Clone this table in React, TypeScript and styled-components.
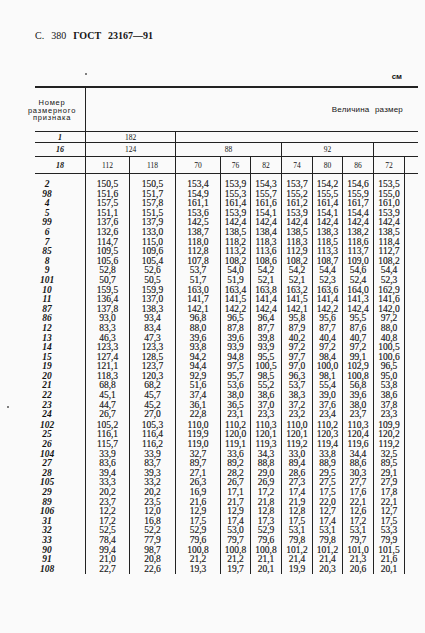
import React from "react";
import styled, { createGlobalStyle } from "styled-components";

const GlobalStyle = createGlobalStyle`
  html, body {
    margin: 0;
    padding: 0;
    background: #fafafa;
  }
`;

const COLS = "50px 44px 46px 45px 30px 31px 31px 30px 31px 31px 14px";
const LINE = "#222";

const Page = styled.div`
  position: relative;
  width: 425px;
  min-height: 633px;
  box-sizing: border-box;
  padding: 30px 7px 0 35px;
  background: #fafafa;
  color: #141414;
  font-family: "Liberation Serif", "DejaVu Serif", serif;
`;

const Title = styled.div`
  display: flex;
  gap: 7px;
  font-size: 10px;
  line-height: 12px;
`;

const TitleBold = styled.span`
  font-weight: bold;
`;

const Unit = styled.div`
  margin-top: 30px;
  padding-right: 16px;
  text-align: right;
  font-family: "Liberation Sans", Arial, sans-serif;
  font-weight: bold;
  font-size: 8px;
  line-height: 10px;
`;

const Table = styled.div`
  margin-top: 4px;
  border-top: 2px solid ${LINE};
`;

const HeadTop = styled.div`
  display: grid;
  grid-template-columns: 50px 1fr;
  height: 43px;
  border-bottom: 1px solid ${LINE};
`;

const HeadLabel = styled.div`
  display: flex;
  flex-direction: column;
  align-items: center;
  padding: 11px 16px 0 0;
  font-family: "Liberation Sans", Arial, sans-serif;
  font-size: 7.5px;
  line-height: 7.5px;
  letter-spacing: 0.8px;
  white-space: nowrap;
`;

const HeadCaption = styled.div`
  display: flex;
  align-items: center;
  justify-content: flex-end;
  padding-right: 15px;
  border-left: 1px solid ${LINE};
  font-family: "Liberation Sans", Arial, sans-serif;
  font-size: 8px;
  letter-spacing: 0.2px;
  word-spacing: 3px;
`;

const HeadRow = styled.div<{ $h: number }>`
  display: grid;
  grid-template-columns: ${COLS};
  height: ${(p) => p.$h}px;
  border-bottom: 1px solid ${LINE};
`;

const HeadNum = styled.div`
  display: flex;
  align-items: center;
  justify-content: center;
  font-style: italic;
  font-weight: bold;
  font-size: 8px;
`;

const HeadCell = styled.div<{ $span?: number; $line?: boolean }>`
  grid-column: span ${(p) => p.$span ?? 1};
  display: flex;
  align-items: center;
  justify-content: center;
  border-left: ${(p) => (p.$line ? `1px solid ${LINE}` : "none")};
  font-size: 7.5px;
`;

const DataRow = styled.div`
  display: grid;
  grid-template-columns: ${COLS};
  line-height: 9.6px;
`;

const RowLabel = styled.div<{ $top: number }>`
  padding: ${(p) => p.$top}px 26px 0 0;
  text-align: center;
  font-style: italic;
  font-weight: bold;
  font-size: 9.5px;
`;

const Value = styled.div<{ $top: number }>`
  padding-top: ${(p) => p.$top}px;
  border-left: 1px solid ${LINE};
  text-align: center;
  font-size: 9.5px;
  white-space: nowrap;
  -webkit-text-stroke: 0.15px #141414;
`;

const Speck = styled.span<{ $x: number; $y: number }>`
  position: absolute;
  left: ${(p) => p.$x}px;
  top: ${(p) => p.$y}px;
  width: 2px;
  height: 2px;
  border-radius: 50%;
  background: #555;
`;

const columns = ["112", "118", "70", "76", "82", "74", "80", "86", "72"];

const rows: [string, string][] = [
  ["2", "150,5 150,5 153,4 153,9 154,3 153,7 154,2 154,6 153,5"],
  ["98", "151,6 151,7 154,9 155,3 155,7 155,2 155,5 155,9 155,0"],
  ["4", "157,5 157,8 161,1 161,4 161,6 161,2 161,4 161,7 161,0"],
  ["5", "151,1 151,5 153,6 153,9 154,1 153,9 154,1 154,4 153,9"],
  ["99", "137,6 137,9 142,5 142,4 142,4 142,4 142,4 142,4 142,4"],
  ["6", "132,6 133,0 138,7 138,5 138,4 138,5 138,3 138,2 138,5"],
  ["7", "114,7 115,0 118,0 118,2 118,3 118,3 118,5 118,6 118,4"],
  ["85", "109,5 109,6 112,8 113,2 113,6 112,9 113,3 113,7 112,7"],
  ["8", "105,6 105,4 107,8 108,2 108,6 108,2 108,7 109,0 108,2"],
  ["9", "52,8 52,6 53,7 54,0 54,2 54,2 54,4 54,6 54,4"],
  ["101", "50,7 50,5 51,7 51,9 52,1 52,1 52,3 52,4 52,3"],
  ["10", "159,5 159,9 163,0 163,4 163,8 163,2 163,6 164,0 162,9"],
  ["11", "136,4 137,0 141,7 141,5 141,4 141,5 141,4 141,3 141,6"],
  ["87", "137,8 138,3 142,1 142,2 142,4 142,1 142,2 142,4 142,0"],
  ["86", "93,0 93,4 96,8 96,5 96,4 95,8 95,6 95,5 97,2"],
  ["12", "83,3 83,4 88,0 87,8 87,7 87,9 87,7 87,6 88,0"],
  ["13", "46,3 47,3 39,6 39,6 39,8 40,2 40,4 40,7 40,8"],
  ["14", "123,3 123,3 93,8 93,9 93,9 97,2 97,2 97,2 100,5"],
  ["15", "127,4 128,5 94,2 94,8 95,5 97,7 98,4 99,1 100,6"],
  ["19", "121,1 123,7 94,4 97,5 100,5 97,0 100,0 102,9 96,5"],
  ["20", "118,3 120,3 92,9 95,7 98,5 96,3 98,1 100,8 95,0"],
  ["21", "68,8 68,2 51,6 53,6 55,2 53,7 55,4 56,8 53,8"],
  ["22", "45,1 45,7 37,4 38,0 38,6 38,3 39,0 39,6 38,6"],
  ["23", "44,7 45,2 36,1 36,5 37,0 37,2 37,6 38,0 37,8"],
  ["24", "26,7 27,0 22,8 23,1 23,3 23,2 23,4 23,7 23,3"],
  ["102", "105,2 105,3 110,0 110,2 110,3 110,0 110,2 110,3 109,9"],
  ["25", "116,1 116,4 119,9 120,0 120,1 120,1 120,3 120,4 120,2"],
  ["26", "115,7 116,2 119,0 119,1 119,3 119,2 119,4 119,6 119,2"],
  ["104", "33,9 33,9 32,7 33,6 34,3 33,0 33,8 34,4 32,5"],
  ["27", "83,6 83,7 89,7 89,2 88,8 89,4 88,9 88,6 89,5"],
  ["28", "39,4 39,3 27,1 28,2 29,0 28,6 29,5 30,3 29,1"],
  ["105", "33,3 33,2 26,3 26,7 26,9 27,3 27,5 27,7 27,9"],
  ["29", "20,2 20,2 16,9 17,1 17,2 17,4 17,5 17,6 17,8"],
  ["89", "23,7 23,5 21,6 21,7 21,8 21,9 22,0 22,1 22,1"],
  ["106", "12,2 12,0 12,9 12,9 12,8 12,8 12,7 12,6 12,7"],
  ["31", "17,2 16,8 17,5 17,4 17,3 17,5 17,4 17,2 17,5"],
  ["32", "52,5 52,2 52,9 53,0 52,9 53,1 53,1 53,1 53,3"],
  ["33", "78,4 77,9 79,6 79,7 79,6 79,8 79,8 79,7 79,9"],
  ["90", "99,4 98,7 100,8 100,8 100,8 101,2 101,2 101,0 101,5"],
  ["91", "21,0 20,8 21,2 21,2 21,1 21,4 21,4 21,3 21,6"],
  ["108", "22,7 22,6 19,3 19,7 20,1 19,9 20,3 20,6 20,1"],
];

// extra space above a row: the first one sits below the header rule
const topGap = (label: string, i: number) => (i === 0 ? 6 : label === "102" ? 1 : 0);

export default function App() {
  return (
    <Page>
      <GlobalStyle />
      <Speck $x={85} $y={73} />
      <Speck $x={7} $y={406} />

      <Title>
        <span>С.</span>
        <span>380</span>
        <TitleBold>ГОСТ</TitleBold>
        <TitleBold>23167—91</TitleBold>
      </Title>

      <Unit>см</Unit>

      <Table>
        <HeadTop>
          <HeadLabel>
            <span>Номер</span>
            <span>размерного</span>
            <span>признака</span>
          </HeadLabel>
          <HeadCaption>Величина размер</HeadCaption>
        </HeadTop>

        <HeadRow $h={10}>
          <HeadNum>1</HeadNum>
          <HeadCell $span={2} $line>182</HeadCell>
          <HeadCell $span={8} $line />
        </HeadRow>

        <HeadRow $h={13}>
          <HeadNum>16</HeadNum>
          <HeadCell $span={2} $line>124</HeadCell>
          <HeadCell $span={3} $line>88</HeadCell>
          <HeadCell $span={3} $line>92</HeadCell>
          <HeadCell $span={2} $line />
        </HeadRow>

        <HeadRow $h={16}>
          <HeadNum>18</HeadNum>
          {columns.map((c) => (
            <HeadCell key={c} $line>
              {c}
            </HeadCell>
          ))}
          <HeadCell $line />
        </HeadRow>

        {rows.map(([label, values], i) => {
          const top = topGap(label, i);
          return (
            <DataRow key={label}>
              <RowLabel $top={top}>{label}</RowLabel>
              {values.split(" ").map((v, j) => (
                <Value key={j} $top={top}>
                  {v}
                </Value>
              ))}
              <Value $top={top} />
            </DataRow>
          );
        })}
      </Table>
    </Page>
  );
}
